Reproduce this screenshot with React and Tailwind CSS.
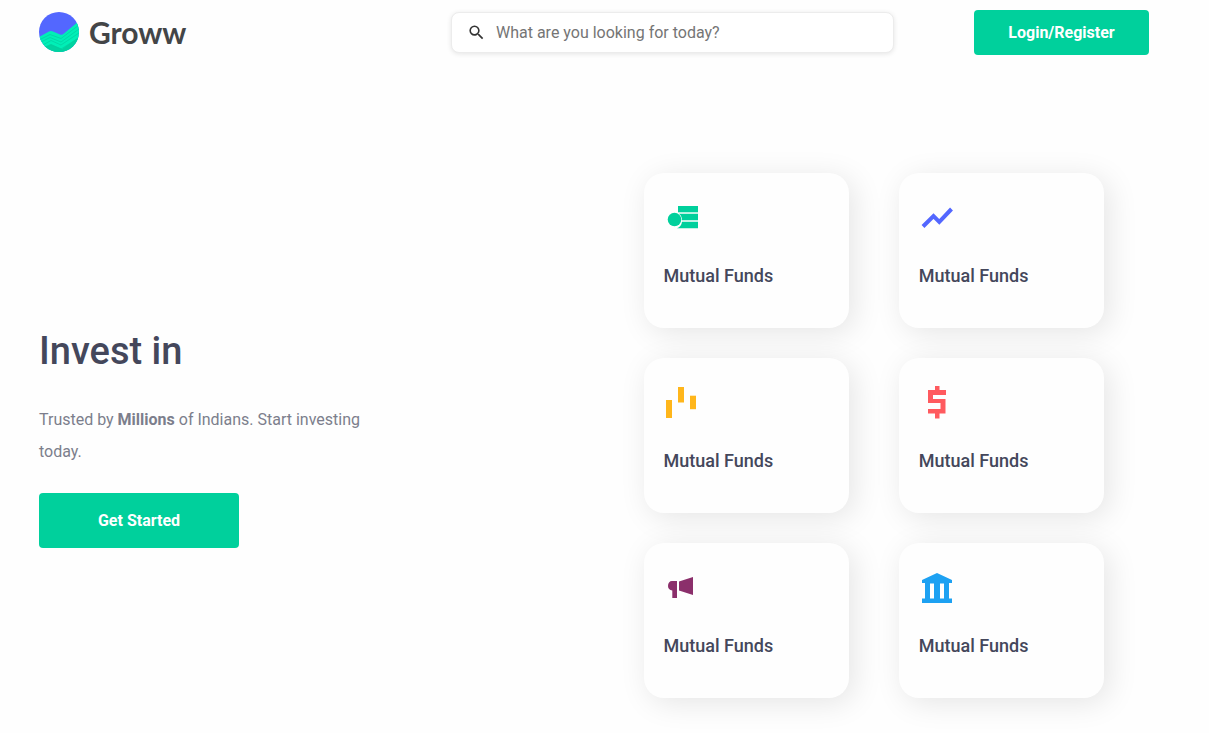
import React from "react";

function LogoMark() {
  return (
    <svg viewBox="0 0 40 40" className="size-10" aria-hidden="true">
      <defs>
        <clipPath id="logo-disc">
          <circle cx="20" cy="20" r="20" />
        </clipPath>
      </defs>
      <g clipPath="url(#logo-disc)">
        <rect width="40" height="40" fill="#5367ff" />
        <path d="M0 25 L10 19.500 Q12 18.500 14 19.500 L21 22.500 Q23 23.500 25 21.500 L40 9 V40 H0Z" fill="#00efb7" />
        <path d="M0 37 L12 32 L23 37 L40 25 V40 H0Z" fill="#00c998" opacity=".75" />
        <g fill="none" stroke="#00cf9f" strokeWidth=".7">
          <path d="M0 28 L11 22.500 L22 26.500 L40 13" />
          <path d="M0 31 L11 25.500 L22 30 L40 17" />
          <path d="M2 34 L12 28.500 L22 33 L40 21" />
          <path d="M4 37 L12 33 L22 37 L38 27" />
        </g>
      </g>
    </svg>
  );
}

function SearchIcon() {
  return (
    <svg viewBox="0 0 24 24" className="size-[19px] shrink-0 fill-[#333333]" aria-hidden="true">
      <path d="M15.5 14h-.79l-.28-.27A6.47 6.47 0 0 0 16 9.5 6.5 6.5 0 1 0 9.5 16c1.61 0 3.09-.59 4.23-1.57l.27.28v.79l5 4.99L20.49 19l-4.99-5zm-6 0C7.01 14 5 11.99 5 9.5S7.01 5 9.5 5 14 7.01 14 9.5 11.99 14 9.5 14z" />
    </svg>
  );
}

const icons = {
  funds: (
    <g fill="#00d09c">
      <path d="M14 6H34V12.300H14Z" />
      <path d="M15 13.700H34V20.300H18A8 8 0 0 0 15 13.700Z" />
      <path d="M18 21.700H34V28.300H13A8 8 0 0 0 18 21.700Z" />
      <circle cx="10.500" cy="19.500" r="6.800" />
    </g>
  ),
  trend: <path d="M4 26.500 L14.500 16 L20.300 21.800 L32.500 9" fill="none" stroke="#5367ff" strokeWidth="4" />,
  bars: (
    <g fill="#ffb61b">
      <rect x="2" y="15" width="6" height="18" />
      <rect x="14" y="2" width="6" height="15.500" />
      <rect x="26" y="10.700" width="6" height="13.500" />
    </g>
  ),
  dollar: (
    <path
      d="M16 1H20.500V5H27V10H14V14H26.500V28.500H20.500V33.500H16V28.500H9V24H21.500V18H9V5H16Z"
      fill="#ff5a5f"
    />
  ),
  megaphone: (
    <g fill="#8b2f6b">
      <path d="M8 11H13V28H8.300V20.500C5.500 20 4 18.500 4 16C4 13 5.500 11 8 11Z" />
      <path d="M15 11.500L29 7V25L15 20.500Z" />
    </g>
  ),
  bank: (
    <path
      d="M18 3L33 10V13H30V28.500H33V33H3V28.500H6V13H3V10ZM11 13.500V28.500H15V13.500ZM21 13.500V28.500H25V13.500Z"
      fill="#1da1f2"
      fillRule="evenodd"
    />
  ),
};

const products = [
  { icon: "funds", title: "Mutual Funds" },
  { icon: "trend", title: "Mutual Funds" },
  { icon: "bars", title: "Mutual Funds" },
  { icon: "dollar", title: "Mutual Funds" },
  { icon: "megaphone", title: "Mutual Funds" },
  { icon: "bank", title: "Mutual Funds" },
];

function ProductCard({ icon, title }) {
  return (
    <article className="rounded-[20px] bg-[#fefefe] px-5 pt-[27px] pb-[38px] shadow-[5px_5px_30px_rgba(0,0,0,0.1)]">
      <svg viewBox="0 0 36 36" className="size-9" aria-hidden="true">
        {icons[icon]}
      </svg>
      <h2 className="mt-[26px] text-lg leading-7 font-medium">{title}</h2>
    </article>
  );
}

export default function App() {
  return (
    <div className="min-h-screen bg-[#fefefe] font-[Roboto,sans-serif] text-[#44475b]">
      <header className="flex items-center py-2.5 pr-[60px] pl-[39px]">
        <a href="#" className="flex items-center gap-2.5 pb-0.5">
          <LogoMark />
          <span className="font-[Lato,sans-serif] text-[30px] leading-9 font-bold text-[#434547]">Groww</span>
        </a>
        <label className="ml-auto flex h-[41px] w-full max-w-[443px] items-center gap-2.5 rounded-lg border border-[#ececec] bg-white px-[15px] shadow-[0_1px_5px_rgba(0,0,0,0.1)]">
          <SearchIcon />
          <input
            type="search"
            aria-label="Search"
            placeholder="What are you looking for today?"
            className="min-w-0 flex-1 bg-transparent text-base outline-none placeholder:text-[#757575]"
          />
        </label>
        <button type="button" className="ml-20 h-[45px] w-[175px] shrink-0 rounded bg-[#00d09c] text-base font-bold text-white">
          Login/Register
        </button>
      </header>

      <main className="grid grid-cols-2 items-center pt-[108px] pb-8">
        <section className="pl-[39px]">
          <h1 className="text-[38px] leading-[56px] font-medium">Invest in</h1>
          <p className="mt-[25px] max-w-[345px] text-base leading-8 text-[#7c7e8c]">
            Trusted by <strong className="font-bold">Millions</strong> of Indians. Start investing today.
          </p>
          <button type="button" className="mt-[25px] h-[55px] w-[200px] rounded bg-[#00d09c] text-base font-bold text-white">
            Get Started
          </button>
        </section>
        <section className="grid grid-cols-2 gap-x-[50px] gap-y-[30px] pr-[105px] pl-[39px]">
          {products.map((product) => (
            <ProductCard key={product.icon} {...product} />
          ))}
        </section>
      </main>
    </div>
  );
}
